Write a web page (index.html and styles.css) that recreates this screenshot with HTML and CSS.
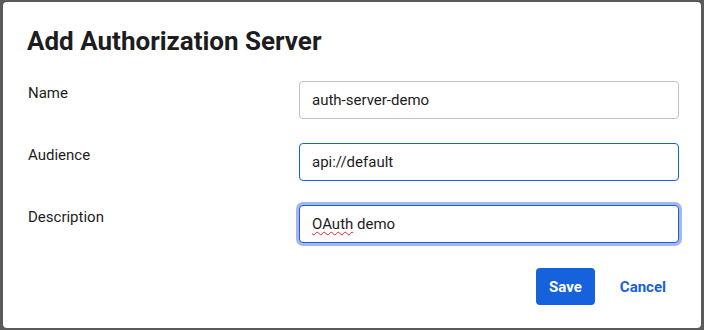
FILE: index.html
```html
<!DOCTYPE html>
<html lang="en">
<head>
  <meta charset="UTF-8">
  <meta name="viewport" content="width=device-width, initial-scale=1.0">
  <title>Add Authorization Server</title>
  <link rel="stylesheet" href="styles.css">
</head>
<body>
  <!-- Modal dialog -->
  <div class="dialog">
    <h1>Add Authorization Server</h1>

    <form class="form">
      <div class="row">
        <label for="name">Name</label>
        <input id="name" class="field" type="text" value="auth-server-demo">
      </div>
      <div class="row">
        <label for="audience">Audience</label>
        <input id="audience" class="field active" type="text" value="api://default">
      </div>
      <div class="row">
        <label for="description">Description</label>
        <div class="field-wrap">
          <input id="description" class="field focused" type="text" value="OAuth demo">
          <span class="spell">OAuth</span>
        </div>
      </div>

      <div class="actions">
        <button type="button" class="btn btn-primary">Save</button>
        <button type="button" class="btn btn-link">Cancel</button>
      </div>
    </form>
  </div>
</body>
</html>
```

FILE: styles.css
```css
/* Basic Styles */
body {
  margin: 0;
  padding: 2px 3px;
  background-color: #5a5a5a;
  font-family: Roboto, "Liberation Sans", Arial, sans-serif;
  color: #1d1d21;
}

.dialog {
  box-sizing: border-box;
  height: 326px;
  background-color: #fff;
  border-radius: 4px;
  padding: 23px 22px 0 24px;
}

h1 {
  margin: 0;
  font-size: 26px;
  line-height: 32px;
  font-weight: 700;
}

/* Form */
.form {
  margin-top: 24px;
}

.row {
  display: grid;
  grid-template-columns: 272px 380px;
  margin-bottom: 24px;
}

.row label {
  font-size: 15px;
  line-height: 20px;
  padding: 2px 0 0 1px;
}

.field {
  box-sizing: border-box;
  width: 380px;
  height: 38px;
  margin: 0;
  padding: 0 12px;
  border: 1px solid #c1c1c8;
  border-radius: 4px;
  font-family: inherit;
  font-size: 15px;
  color: #1d1d21;
  background: #fff;
  outline: none;
}

.field.active,
.field.focused {
  border-color: #1662dd;
}

.field.focused {
  box-shadow: 0 0 0 3px #a7b5ec;
}

.field-wrap {
  position: relative;
}

/* spell-check squiggle drawn over the input text */
.spell {
  position: absolute;
  left: 13px;
  top: 0;
  line-height: 38px;
  font-size: 15px;
  color: transparent;
  text-decoration: underline wavy #e0252b;
  text-decoration-thickness: 1px;
  text-underline-offset: 2px;
  pointer-events: none;
}

/* Buttons */
.actions {
  display: flex;
  justify-content: flex-end;
  gap: 12px;
  margin-top: 25px;
  padding-right: 0;
}

.btn {
  height: 37px;
  padding: 0 13px;
  border: none;
  border-radius: 4px;
  font-family: inherit;
  font-size: 15px;
  font-weight: 700;
  cursor: pointer;
}

.btn-primary {
  background-color: #1662dd;
  color: #fff;
}

.btn-link {
  background: none;
  color: #1662dd;
}
```
